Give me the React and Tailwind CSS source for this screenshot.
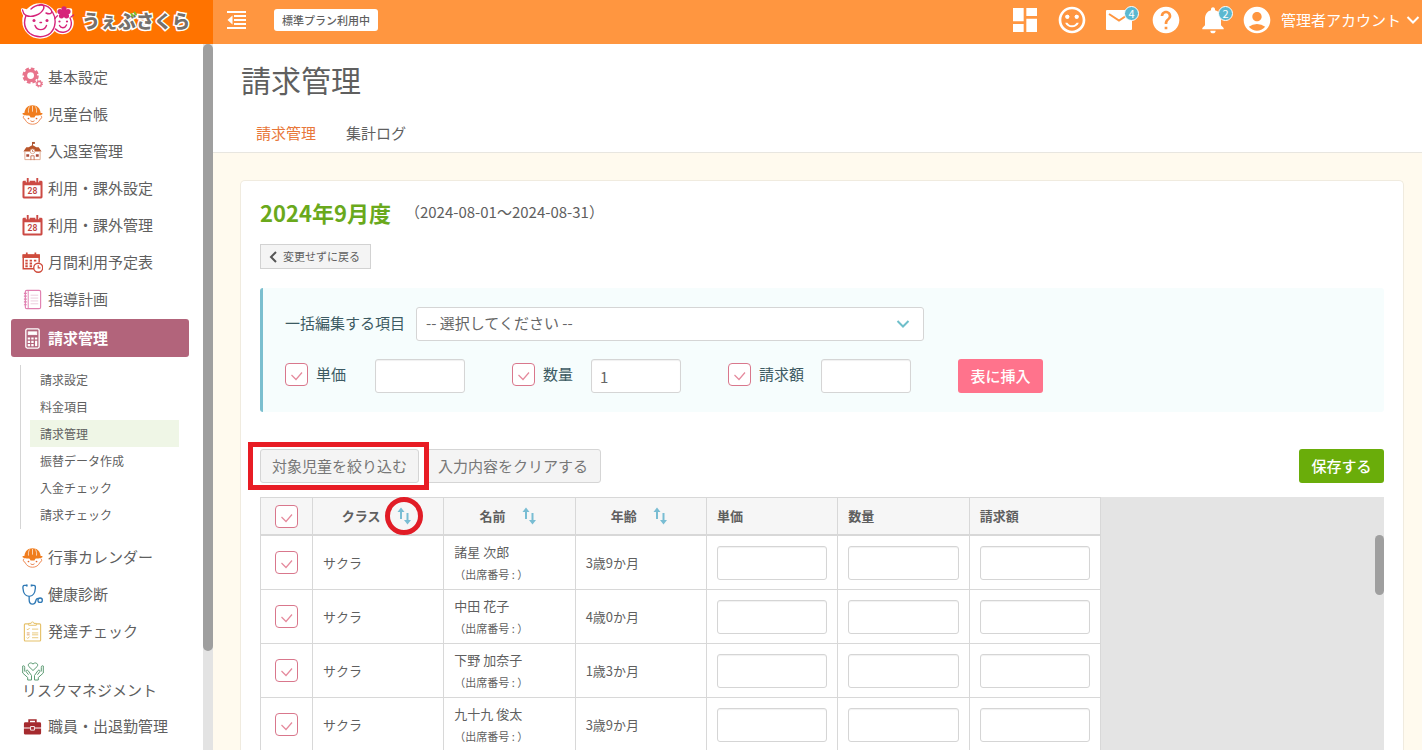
import React, { useState } from "react";
import {
  MdAccountCircle,
  MdDashboard,
  MdHelp,
  MdNotifications,
  MdSentimentSatisfiedAlt,
} from "react-icons/md";

const GearIcon = () => (
  <svg viewBox="0 0 22 22" className="w-[21px] h-[21px]" fill="none" stroke="#e8748c">
    <circle cx="9" cy="9" r="5.3" strokeWidth="3.4" />
    <circle cx="9" cy="9" r="7.4" strokeWidth="2.4" strokeDasharray="3.8 2.01" />
    <circle cx="18" cy="17.500" r="2.300" strokeWidth="1.500" />
    <circle cx="18" cy="17.500" r="3.400" strokeWidth="1.200" strokeDasharray="1.500 1.170" />
  </svg>
);

const ChildIcon = () => (
  <svg viewBox="0 0 22 22" className="w-[21px] h-[21px]" fill="none">
    <path d="M2.5 9.500C3 4 6.500 1.200 11 1.200s8 2.800 8.500 8.300z" fill="#f07d1e" />
    <path d="M8 2.500C6.700 4.500 6.600 6.500 6.800 9M14 2.500c1.300 2 1.400 4 1.200 6.500M11 2v6" stroke="#fff" strokeWidth=".7" />
    <path d="M1.200 9.300h19.600a.9.900 0 0 1 .2 1.700c-2 .9-3.500 1-5 1H6c-1.500 0-3-.1-5-1a.9.900 0 0 1 .2-1.700z" fill="#f07d1e" />
    <path d="M7.500 11.500h7L13 14.200h-4z" fill="#f07d1e" />
    <path d="M2.500 12.300c-1.800.2-1.500 3.300.6 3.600 1.400 3.600 4.400 5.300 7.900 5.300s6.500-1.700 7.900-5.300c2.100-.3 2.400-3.400.6-3.600" stroke="#ee8a55" strokeWidth="1" />
    <circle cx="6.800" cy="15.200" r=".9" fill="#e2672c" />
    <circle cx="15.200" cy="15.200" r=".9" fill="#e2672c" />
    <path d="M9 17.600c1.300 1 2.700 1 4 0" stroke="#e2672c" />
  </svg>
);

const SchoolIcon = () => (
  <svg viewBox="0 0 22 22" className="w-[21px] h-[21px]" fill="none">
    <path d="M11 1v4" stroke="#a9502c" />
    <path d="M11 1h2.500v2H11z" fill="#a9502c" />
    <path d="M7 6.500 11 4.200l4 2.300h2.500l3 4.500h-19l3-4.500z" fill="#b9562c" />
    <path d="M3 11.500v8h16v-8" stroke="#e0a88e" />
    <circle cx="11" cy="10.800" r="2.500" fill="#fff" stroke="#d99a7d" strokeWidth=".8" />
    <path d="M11 9.400V11h1.200" stroke="#b9562c" strokeWidth=".7" />
    <path d="M4.500 14h3v2.500h-3zM14.500 14h3v2.500h-3z" fill="#a94c3c" />
    <path d="M9.300 20v-4.500h3.400V20" stroke="#c9765a" />
  </svg>
);

const CalendarIcon = () => (
  <svg viewBox="0 0 22 22" className="w-[21px] h-[21px]" fill="none">
    <path
      fillRule="evenodd"
      d="M2 3h18a1.500 1.500 0 0 1 1.500 1.500v15.500a1.500 1.500 0 0 1-1.500 1.500H2A1.500 1.500 0 0 1 .5 20V4.500A1.500 1.500 0 0 1 2 3zm.6 4.500v12h16.800v-12z"
      fill="#cc4a44"
    />
    <path d="M6 .5v4M16 .5v4" stroke="#fff" strokeWidth="4" />
    <path d="M6 .5v4M16 .5v4" stroke="#cc4a44" strokeWidth="2" strokeLinecap="round" />
    <text x="11" y="16.800" textAnchor="middle" fontSize="9" fontWeight="600" fontFamily="Roboto, sans-serif" fill="#c0433e">
      28
    </text>
  </svg>
);

const ScheduleIcon = () => (
  <svg viewBox="0 0 22 22" className="w-[21px] h-[21px]" fill="none" stroke="#cf4b3c">
    <path d="M13 17.500H1.300V3H18v8" strokeWidth="1.500" />
    <path d="M.6 4.500h18" strokeWidth="3.500" />
    <path d="M5 .5v4M14 .5v4" strokeWidth="1.800" />
    <path d="M3.500 9h2.500M8 9h2.500M12.500 9H15M3.500 12H6M8 12h2.500M3.500 15H6M8 15h2.500" strokeWidth="2" />
    <circle cx="17" cy="16.500" r="4.700" fill="#fff" strokeWidth="1.400" />
    <path d="M17 13.800v2.900h2.300" strokeWidth="1.200" />
  </svg>
);

const NotebookIcon = () => (
  <svg viewBox="0 0 22 22" className="w-[21px] h-[21px]" fill="none" stroke="#e07fb0">
    <rect x="3.500" y="1.500" width="16" height="19" rx="1.500" strokeWidth="1.200" />
    <path d="M6.500 1.500v19" />
    <path d="M2 4.500h3M2 7.500h3M2 10.500h3M2 13.500h3M2 16.500h3" strokeWidth="1.300" />
    <path d="M9 6.500h8M9 9.500h8M9 12.500h8M9 15.500h8" strokeWidth=".7" stroke="#e3b6ce" />
  </svg>
);

const CalculatorIcon = () => (
  <svg viewBox="0 0 22 22" className="w-[21px] h-[21px]" fill="none" stroke="#fff">
    <rect x="4" y="1" width="14" height="20" rx="1.500" strokeWidth="1.400" />
    <rect x="6.500" y="4" width="9" height="3" fill="#fff" strokeWidth=".8" />
    <path d="M6 11h2.500M9.700 11h2.500M13.500 11H16M6 14.500h2.500M9.700 14.500h2.500M6 18h2.500M9.700 18h2.500" strokeWidth="2.300" />
    <path d="M14.800 13.300V19" strokeWidth="2.300" />
  </svg>
);

const StethoscopeIcon = () => (
  <svg viewBox="0 0 22 22" className="w-[21px] h-[21px]" fill="none" stroke="#2f79b5" strokeWidth="1.400">
    <path d="M5 1.500H2.500C1 1.500.9 3 1 4.500c.3 4.500 2.500 8.500 6.500 8.500s6.200-4 6.500-8.500c.1-1.500 0-3-1.500-3H10" />
    <path d="M7.500 13v3.500c0 2.800 1.300 4.500 3.500 4.500s3.200-1.500 3.500-3.500c.2-1.500 1-2.500 2.500-2.500" />
    <circle cx="19" cy="17" r="2.300" />
    <path d="M5 .6v2M10 .6v2" strokeWidth="1.800" />
  </svg>
);

const ChecklistIcon = () => (
  <svg viewBox="0 0 22 22" className="w-[21px] h-[21px]" fill="none" stroke="#e6c16a">
    <rect x="2.500" y="3" width="17" height="18" rx="1" strokeWidth="1.200" />
    <path d="M7 4.500V2.500h2.500a1.500 1.500 0 0 1 3 0H15v2z" fill="#fff" />
    <path d="m5 8.300 1 1 2-2M5 17.300l1 1 2-2" />
    <path d="M5 12.500h3M5 14.500h3" stroke="#e0a56e" />
    <path d="M10.500 8.500H17M10.500 12.500H17M10.500 14.500H17M10.500 17.500H17" strokeWidth=".9" />
  </svg>
);

const HandsIcon = () => (
  <svg viewBox="0 0 22 20" className="w-[22px] h-5" fill="none" stroke="#5d9c74">
    <path d="M11 9.500 6.800 5.500C5 3 8.500.5 11 3c2.500-2.500 6 0 4.200 2.500z" />
    <path d="M.7 5v7l5 4.500V19h3.800v-4.500L6 9.500c-1-1-2.500 0-1.800 1.200l2.300 3M.7 5c1.500-.8 2 .3 2 1.500v4" />
    <path d="M21.300 5v7l-5 4.500V19h-3.800v-4.500l3.500-5c1-1 2.500 0 1.800 1.200l-2.300 3M21.300 5c-1.500-.8-2 .3-2 1.500v4" />
  </svg>
);

const BriefcaseIcon = () => (
  <svg viewBox="0 0 22 22" className="w-[21px] h-[21px]" fill="none">
    <path d="M7.500 7V4.200h7V7" stroke="#a52a2e" strokeWidth="1.800" />
    <path d="M3.500 6.500h15A1.500 1.500 0 0 1 20 8v4H2V8a1.500 1.500 0 0 1 1.500-1.500zM2 13.200h18V18a1.500 1.500 0 0 1-1.500 1.500h-15A1.500 1.500 0 0 1 2 18z" fill="#a52a2e" />
    <path d="M9 11h4v3.800H9z" fill="#a52a2e" stroke="#fff" strokeWidth=".9" />
  </svg>
);

const LogoMark = () => (
  <svg viewBox="0 0 54 40" className="w-[54px] h-[40px]" fill="none">
    <g stroke="#fff" strokeWidth="3.500" fill="#fff" strokeLinejoin="round">
      <circle cx="19" cy="21" r="16" />
      <circle cx="41.500" cy="23" r="9.500" />
      <path d="M1.500 10 4 15.500 9 12zM37.500 10h12v8h-12z" />
    </g>
    <g stroke="#d6247a" strokeWidth="1.400" strokeLinecap="round">
      <path d="M1.500 10c.5 3 1.800 4.500 3.500 5.500 6 2.500 15-1 17.500-6.500 1.500-3.500-2-6-4.500-3.500" />
      <path d="M5 15.500C2.500 22 3.500 29 9 33.500c6 4.500 15 4.300 20.500-.5 5.500-5.500 6-14.500 2-21" />
      <path d="M10 9C15 4 24 3.500 29 8.500c4 4 .5 6.500-4 4.500" />
      <path d="M34.500 29c4.500 5 12.500 4 15-1.500 1.500-3.500 1-6.500-.5-9.500M34 18.500c1-1.500 1.500-2 2.500-2.700" />
      <path d="M14 25.500c2 5.500 9.500 5.500 11.500 0M38.500 25.500c1.500 3 5.500 3 7-.5" />
      <path d="M19 22.500h1.500M50 17l2.500-2" />
    </g>
    <g fill="#d6247a">
      <circle cx="13" cy="20.500" r="1.500" />
      <circle cx="26" cy="20.500" r="1.500" />
      <circle cx="38.500" cy="21.500" r="1.100" />
      <circle cx="46" cy="21.500" r="1.100" />
      <circle cx="43" cy="8.800" r="2.600" />
      <circle cx="47" cy="11.500" r="2.600" />
      <circle cx="45.500" cy="15.800" r="2.600" />
      <circle cx="40.500" cy="15.800" r="2.600" />
      <circle cx="39" cy="11.500" r="2.600" />
      <circle cx="43" cy="12.500" r="3" />
    </g>
  </svg>
);

const OutdentIcon = () => (
  <svg viewBox="0 0 19 18" className="w-[19px] h-[18px]" fill="none" stroke="#fff" strokeWidth="2">
    <path d="M0 1h19M7 5h12M7 9h12M7 13h12M0 17h19" />
    <path d="M5.500 4.500v9L.5 9z" fill="#fff" stroke="none" />
  </svg>
);

const MailIcon = () => (
  <svg viewBox="0 0 32 32" className="w-8 h-8" fill="none">
    <rect x="3" y="6" width="26" height="20" rx="1" fill="#fff" />
    <path d="m6 10 10 6.500L26 10" stroke="#ff9640" strokeWidth="2" />
  </svg>
);

const SortIcon = () => (
  <svg viewBox="0 0 14 18" className="w-[14px] h-[18px]" fill="none" stroke="#79bdd3" strokeWidth="2">
    <path d="M4 12V3M10.500 6v9" />
    <path d="M.5 5 4 .5 7.500 5zM7 13l3.500 4.500L14 13z" fill="#79bdd3" stroke="none" />
  </svg>
);

const ChevronDown = ({ className }) => (
  <svg viewBox="0 0 14 8" className={className} fill="none" stroke="currentColor" strokeWidth="2">
    <path d="m1.500 1 5.500 5.500L12.500 1" />
  </svg>
);

const mainMenu = [
  { label: "基本設定", Icon: GearIcon },
  { label: "児童台帳", Icon: ChildIcon },
  { label: "入退室管理", Icon: SchoolIcon },
  { label: "利用・課外設定", Icon: CalendarIcon },
  { label: "利用・課外管理", Icon: CalendarIcon },
  { label: "月間利用予定表", Icon: ScheduleIcon },
  { label: "指導計画", Icon: NotebookIcon },
  { label: "請求管理", Icon: CalculatorIcon, active: true },
];

const subMenu = ["請求設定", "料金項目", "請求管理", "振替データ作成", "入金チェック", "請求チェック"];

const lowerMenu = [
  { label: "行事カレンダー", Icon: ChildIcon },
  { label: "健康診断", Icon: StethoscopeIcon },
  { label: "発達チェック", Icon: ChecklistIcon },
  { label: "リスクマネジメント", Icon: HandsIcon, stacked: true },
  { label: "職員・出退勤管理", Icon: BriefcaseIcon },
];

const children = [
  { id: 1, className: "サクラ", name: "諸星 次郎", age: "3歳9か月" },
  { id: 2, className: "サクラ", name: "中田 花子", age: "4歳0か月" },
  { id: 3, className: "サクラ", name: "下野 加奈子", age: "1歳3か月" },
  { id: 4, className: "サクラ", name: "九十九 俊太", age: "3歳9か月" },
];

const Checkbox = ({ id, label }) => (
  <span className="relative inline-block w-[23px] h-[23px] shrink-0 align-middle">
    <input
      id={id}
      type="checkbox"
      defaultChecked
      aria-label={label}
      className="peer block w-full h-full appearance-none rounded-[4px] border border-[#d9778c] bg-white"
    />
    <svg
      viewBox="0 0 23 23"
      className="absolute inset-0 w-full h-full pointer-events-none invisible peer-checked:visible"
      fill="none"
      stroke="#e58a9d"
      strokeWidth="1.200"
    >
      <path d="m6.500 12 4.500 4.500 6-7" />
    </svg>
  </span>
);

const MenuItem = ({ item }) => {
  const { label, Icon, active, stacked } = item;
  if (stacked) {
    return (
      <li>
        <a href="#" className="block pt-[11px] pb-[9px] pl-[11px]">
          <Icon />
          <span className="block leading-[18px]">{label}</span>
        </a>
      </li>
    );
  }
  return (
    <li>
      <a
        href="#"
        className={
          active
            ? "flex items-center gap-[5px] h-[38px] mt-px pl-[11px] rounded-[3px] bg-[#b2647b] text-white font-bold"
            : "flex items-center gap-[5px] h-[37px] pl-[11px]"
        }
      >
        <Icon />
        {label}
      </a>
    </li>
  );
};

const Header = () => (
  <header className="flex h-11 shrink-0 bg-[#ff9640] text-white">
    <a href="#" className="flex items-center w-[213px] shrink-0 pl-[21px] gap-[7px] pb-1 bg-[#ff7300]">
      <LogoMark />
      <span className="relative text-[18px] leading-6 font-black text-[#75706b] [-webkit-text-stroke:3px_#fff] [paint-order:stroke]">
        うぇぶさくら
        <svg viewBox="0 0 7 7" className="absolute left-[48px] top-[3px] w-[7px] h-[7px]" stroke="#7cbf2b" strokeWidth="2" strokeLinecap="round">
          <path d="m1.500 3 1.300 2M4.500 1.500l1.300 2" />
        </svg>
      </span>
    </a>
    <div className="flex flex-1 items-center pl-[14px] pr-[2px] pb-1">
      <button type="button" aria-label="メニュー">
        <OutdentIcon />
      </button>
      <span className="ml-7 px-2 rounded-[3px] bg-white text-[#5f5f5f] text-[11px] leading-[22px] font-medium">
        標準プラン利用中
      </span>
      <div className="flex items-center gap-[15px] ml-auto">
        <button type="button" aria-label="ダッシュボード">
          <MdDashboard size={32} />
        </button>
        <button type="button" aria-label="スマイル">
          <MdSentimentSatisfiedAlt size={32} />
        </button>
        <button type="button" aria-label="メール" className="relative">
          <MailIcon />
          <span className="absolute -right-1 top-[2px] w-[15px] h-[15px] rounded-full border border-white bg-[#5bb8d0] text-[11px] leading-[13px]">
            4
          </span>
        </button>
        <button type="button" aria-label="ヘルプ">
          <MdHelp size={32} />
        </button>
        <button type="button" aria-label="お知らせ" className="relative">
          <MdNotifications size={32} />
          <span className="absolute -right-1 top-[2px] w-[15px] h-[15px] rounded-full border border-white bg-[#5bb8d0] text-[11px] leading-[13px]">
            2
          </span>
        </button>
      </div>
      <button type="button" className="flex items-center ml-3 text-[15px]">
        <MdAccountCircle size={32} />
        <span className="ml-2 mr-[5px]">管理者アカウント</span>
        <ChevronDown className="w-[14px] h-2" />
      </button>
    </div>
  </header>
);

const Sidebar = () => (
  <aside className="flex w-[213px] shrink-0 overflow-hidden bg-white text-[15px]">
    <nav className="flex-1 pl-[11px] pr-[14px] pt-[15px]">
      <ul>
        {mainMenu.map((item) => (
          <MenuItem item={item} key={item.label} />
        ))}
      </ul>
      <ul className="mt-2 mb-[10px] ml-[9px] mr-[10px] py-px pl-[9px] border-l border-[#d5d5d5] text-xs">
        {subMenu.map((label) => (
          <li key={label}>
            <a
              href="#"
              className={
                label === "請求管理"
                  ? "block pl-[10px] leading-[27px] bg-[#eff6e6]"
                  : "block pl-[10px] leading-[27px]"
              }
            >
              {label}
            </a>
          </li>
        ))}
      </ul>
      <ul>
        {lowerMenu.map((item) => (
          <MenuItem item={item} key={item.label} />
        ))}
      </ul>
    </nav>
    <div className="w-[10px] bg-[#e3e3e3]">
      <div className="h-[86%] rounded-full bg-[#9f9f9f]" />
    </div>
  </aside>
);

const inputClass =
  "block h-[34px] rounded-[3px] border border-[#d5d5d5] bg-white px-2 text-[15px] shadow-[inset_0_1px_1px_rgba(0,0,0,0.06)]";

const BulkEdit = () => {
  const [quantity, setQuantity] = useState("1");

  return (
    <section className="mt-[19px] py-[19px] pl-[22px] pr-4 rounded-[3px] border-l-[3px] border-[#7bbfcf] bg-[#f6fdfd] text-[#3c5a62]">
      <div className="flex items-center gap-[11px]">
        <label htmlFor="item" className="pb-[2px]">一括編集する項目</label>
        <div className="relative w-full max-w-[508px]">
          <select
            id="item"
            className="w-full h-[34px] appearance-none rounded-[3px] border border-[#d5d5d5] bg-white px-[9px] pb-[2px] text-[15px] text-[#666]"
          >
            <option>-- 選択してください --</option>
          </select>
          <ChevronDown className="absolute right-[14px] top-[13px] w-[14px] h-2 text-[#6fbfca] pointer-events-none" />
        </div>
      </div>
      <div className="flex gap-[47px] mt-[18px]">
        <div className="flex">
          <div className="flex w-[90px] pt-1 gap-2">
            <Checkbox id="price" />
            <label htmlFor="price" className="leading-[22px]">単価</label>
          </div>
          <input type="text" aria-label="単価" className={`${inputClass} w-[90px]`} />
        </div>
        <div className="flex">
          <div className="flex w-[79px] pt-1 gap-2">
            <Checkbox id="quantity" />
            <label htmlFor="quantity" className="leading-[22px]">数量</label>
          </div>
          <input
            type="text"
            aria-label="数量"
            value={quantity}
            onChange={(e) => setQuantity(e.target.value)}
            className={`${inputClass} w-[90px] text-[#666]`}
          />
        </div>
        <div className="flex">
          <div className="flex w-[93px] pt-1 gap-2">
            <Checkbox id="amount" />
            <label htmlFor="amount" className="leading-[22px]">請求額</label>
          </div>
          <input type="text" aria-label="請求額" className={`${inputClass} w-[90px]`} />
        </div>
        <button type="button" className="h-[34px] w-[85px] rounded-[3px] bg-[#ff738c] text-white font-medium">
          表に挿入
        </button>
      </div>
    </section>
  );
};

const cell = "border-r border-b border-[#d8d8d8] px-[10px]";
const headCell = "border-r border-b-2 border-[#d8d8d8] px-[10px] h-[38px] bg-[#f6f6f6] font-bold";

const ChildTable = () => (
  <div className="flex flex-1 items-start mt-[14px] bg-[#e4e4e4]">
    <table className="w-[841px] table-fixed border-separate border-spacing-0 border-l border-t border-[#d8d8d8] bg-white text-[13px]">
      <colgroup>
        <col className="w-[52px]" />
        <col />
        <col />
        <col />
        <col />
        <col />
        <col />
      </colgroup>
      <thead>
        <tr>
          <th className={`${headCell} text-center`}>
            <Checkbox label="すべて選択" />
          </th>
          {["クラス", "名前", "年齢"].map((title, index) => (
            <th className={headCell} key={title}>
              <div className="flex items-center justify-center gap-4 pr-1">
                {title}
                <button type="button" aria-label={`${title}で並べ替え`} className="relative">
                  <SortIcon />
                  {index === 0 && (
                    <span className="absolute -inset-x-3 -inset-y-[10px] rounded-full border-[5px] border-[#e11c26]" />
                  )}
                </button>
              </div>
            </th>
          ))}
          {["単価", "数量", "請求額"].map((title) => (
            <th className={`${headCell} text-left`} key={title}>
              {title}
            </th>
          ))}
        </tr>
      </thead>
      <tbody>
        {children.map((child) => (
          <tr key={child.id}>
            <td className={`${cell} h-[54px] text-center`}>
              <Checkbox label={child.name} />
            </td>
            <td className={cell}>{child.className}</td>
            <td className={cell}>
              <p className="leading-[22px]">{child.name}</p>
              <p className="text-[11px] leading-[22px]">（出席番号 : ）</p>
            </td>
            <td className={cell}>{child.age}</td>
            {["単価", "数量", "請求額"].map((field) => (
              <td className={cell} key={field}>
                <input type="text" aria-label={`${child.name} ${field}`} className={`${inputClass} w-full`} />
              </td>
            ))}
          </tr>
        ))}
      </tbody>
    </table>
    <div className="w-[9px] h-[60px] ml-auto mt-[38px] rounded-full bg-[#9f9f9f]" />
  </div>
);

const App = () => {
  return (
    <div className="flex flex-col h-screen overflow-hidden bg-white text-[#5f5f5f] text-[15px] font-['Noto_Sans_CJK_JP',sans-serif]">
      <Header />
      <div className="flex flex-1 min-h-0">
        <Sidebar />
        <main className="flex flex-col flex-1 min-w-0 overflow-hidden bg-[#fffaee]">
          <div className="shrink-0 px-7 pt-[14px] border-b border-[#e8e6e0] bg-white">
            <h1 className="text-[30px] leading-[42px]">請求管理</h1>
            <nav className="flex gap-[30px] mt-[14px] pl-[15px]">
              <a href="#" className="leading-[38px] text-[#e8773a]">請求管理</a>
              <a href="#" className="leading-[38px]">集計ログ</a>
            </nav>
          </div>
          <div className="flex flex-col flex-1 mt-[27px] ml-[27px] mr-[18px] px-[19px] pt-[15px] rounded-t-[5px] border border-b-0 border-[#f0ebdf] bg-white">
            <div className="flex items-center">
              <h2 className="text-[22px] leading-8 font-bold text-[#6aa91c]">2024年9月度</h2>
              <p className="ml-[14px]">（2024-08-01～2024-08-31）</p>
            </div>
            <div className="flex mt-4">
              <button
                type="button"
                className="flex items-center h-[25px] pl-[7px] pr-[10px] gap-[5px] border border-[#d2d2d2] bg-[#f4f4f4] text-[11px]"
              >
                <svg viewBox="0 0 10 12" className="w-[10px] h-3" fill="none" stroke="#555" strokeWidth="2">
                  <path d="M8 1 3 6l5 5" />
                </svg>
                変更せずに戻る
              </button>
            </div>
            <BulkEdit />
            <div className="flex items-center gap-[6px] mt-[37px]">
              <div className="relative z-10">
                <button type="button" className="block h-[34px] px-[11px] rounded-[3px] border border-[#d5d5d5] bg-[#f4f4f4] text-[#777]">
                  対象児童を絞り込む
                </button>
                <span className="absolute -left-3 -right-[10px] -inset-y-[7px] border-[5px] border-[#e81c24] pointer-events-none" />
              </div>
              <button type="button" className="block h-[34px] px-3 rounded-[3px] border border-[#d5d5d5] bg-[#f4f4f4] text-[#777]">
                入力内容をクリアする
              </button>
              <button type="button" className="h-[34px] w-[85px] ml-auto rounded-[3px] bg-[#6aad0a] text-white font-medium">
                保存する
              </button>
            </div>
            <ChildTable />
          </div>
        </main>
      </div>
    </div>
  );
};

export default App;
